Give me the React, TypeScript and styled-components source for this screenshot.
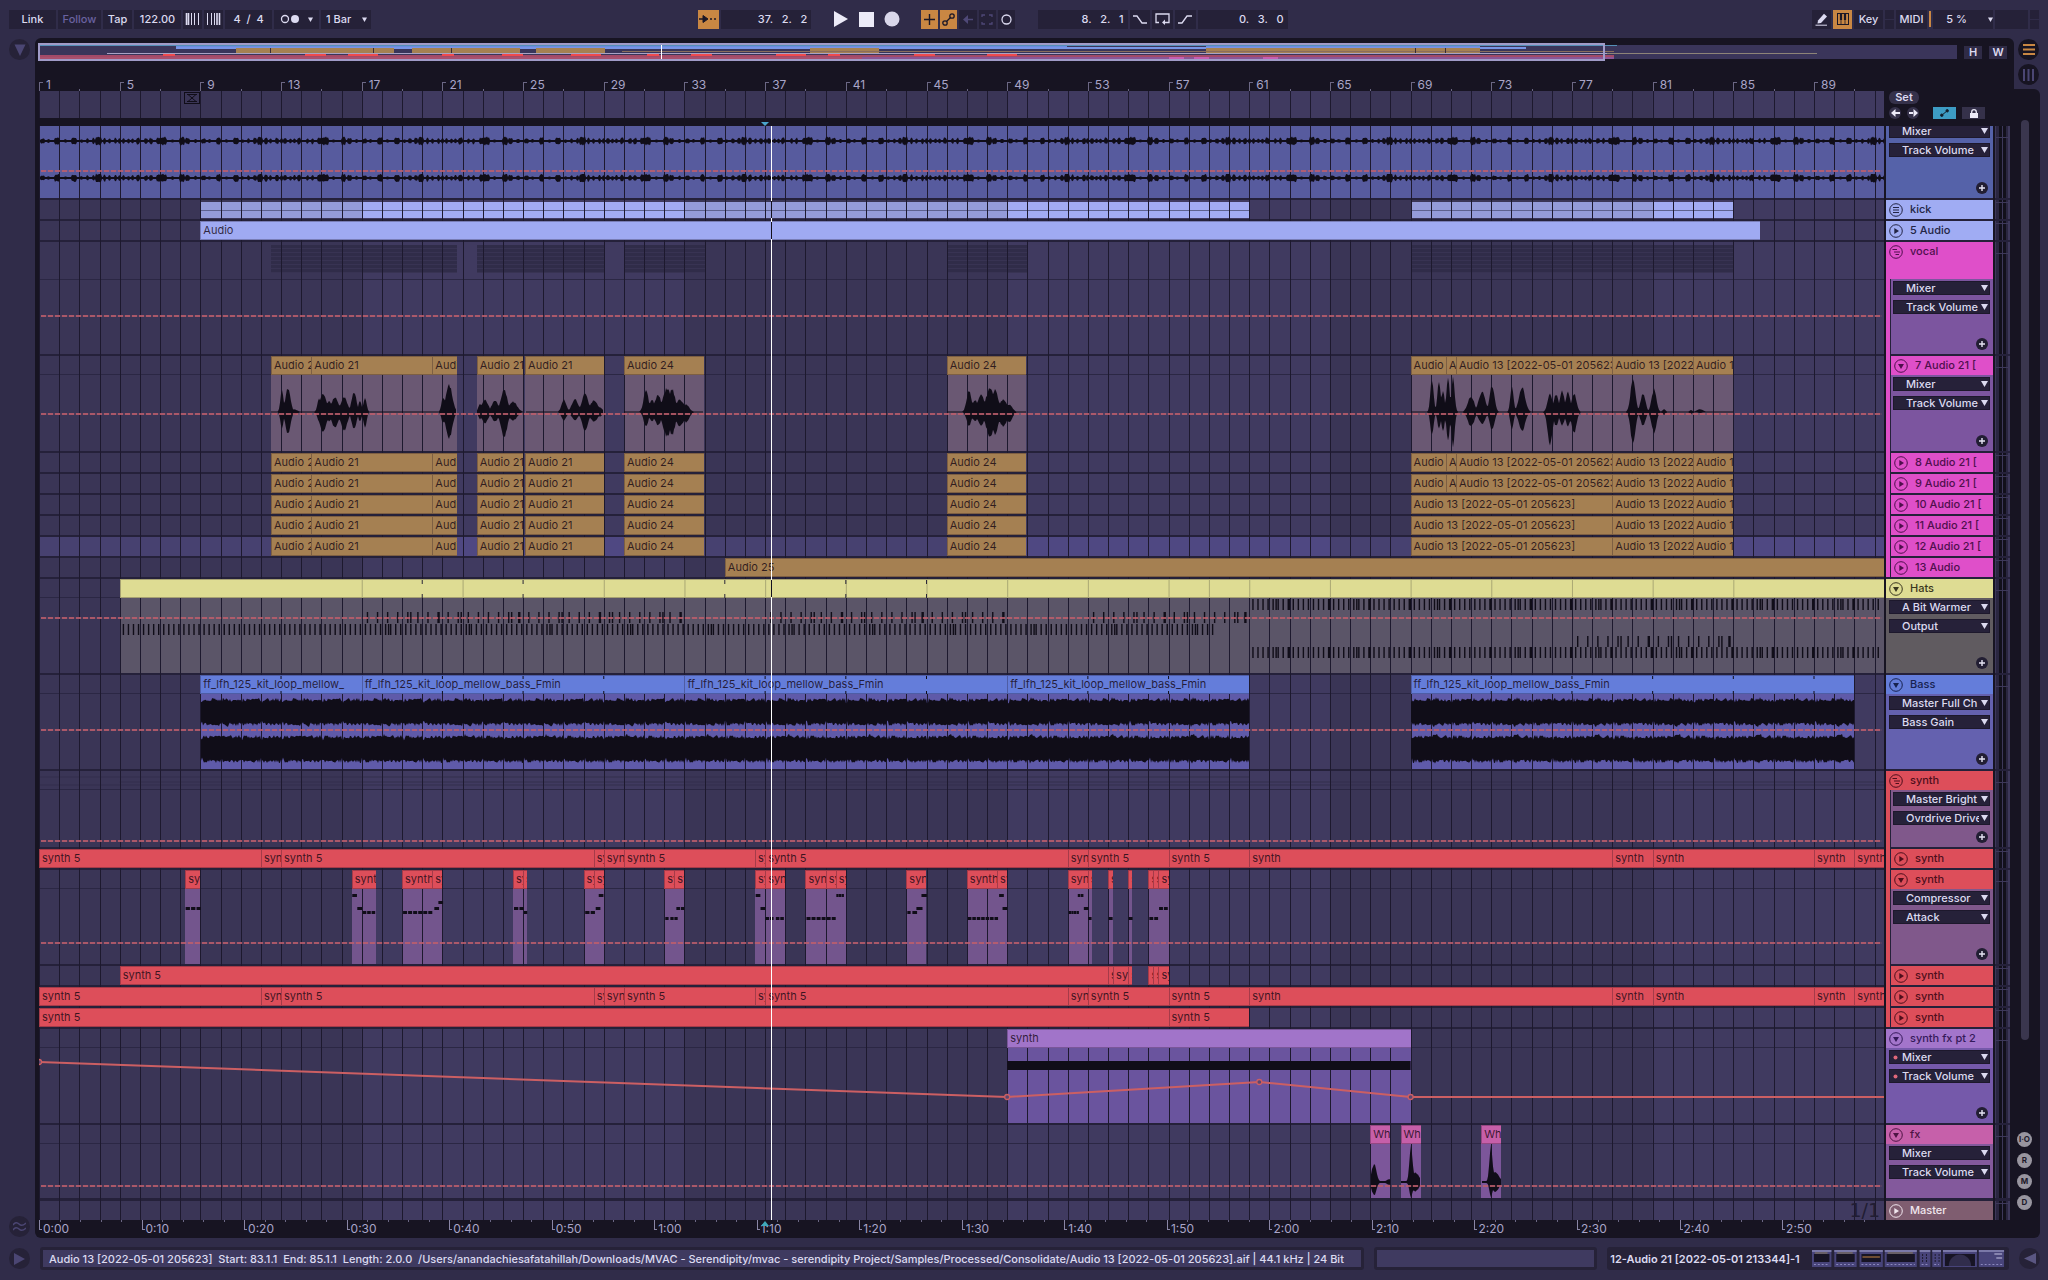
import React from "react";
import styled, { createGlobalStyle } from "styled-components";

/* ---------- palette ---------- */
const C = {
  frame: "#302c49",
  well: "#252138",
  black: "#171422",
  line: "#25213a",
  laneA: "#3a3556",
  laneB: "#403a60",
  text: "#dcdaf0",
  dim: "#a9a5c8",
  orange: "#c98743",
  automation: "#cc5f63",
};

/* ---------- timeline geometry ---------- */
const TOTAL_BARS = 91.47;
const SECONDS = 179.94;
const LANE_UNITS = 1845;
const PX_PER_BAR = LANE_UNITS / TOTAL_BARS;
const pct = (bar: number) => `${((bar - 1) / TOTAL_BARS) * 100}%`;
const span = (from: number, to: number) => ({
  left: pct(from),
  width: `${((Math.min(to, TOTAL_BARS + 1) - from) / TOTAL_BARS) * 100}%`,
});
const bx = (bar: number) => (bar - 1) * PX_PER_BAR;

const Global = createGlobalStyle`
  * { box-sizing: border-box; }
  body {
    margin: 0;
    background: ${C.frame};
    color: ${C.text};
    font: 500 11px/16px Inter, "Liberation Sans", sans-serif;
  }
  button, input, select { font: inherit; color: inherit; margin: 0; border: 0; border-radius: 0; }
  button { padding: 0; }
`;

/* ---------- frame ---------- */
const App_ = styled.div`
  display: flex;
  flex-direction: column;
  min-height: 100vh;
`;
const Toolbar = styled.header`
  display: flex;
  align-items: center;
  height: 38px;
  padding: 0 9px;
`;
const Group = styled.div<{ $gap?: number }>`
  display: flex;
  align-items: center;
  gap: ${(p) => p.$gap ?? 2}px;
`;
const Transport = styled(Group)`
  margin: 0 19px;
`;
const Spacer = styled.div<{ $grow: number; $basis?: number }>`
  flex: ${(p) => p.$grow} 1 ${(p) => p.$basis ?? 0}px;
`;
const Tool = styled.button<{ $w: number; $on?: boolean; $dim?: boolean }>`
  display: flex;
  align-items: center;
  justify-content: center;
  gap: 8px;
  width: ${(p) => p.$w}px;
  height: 19px;
  background: ${(p) => (p.$on ? C.orange : C.well)};
  color: ${(p) => (p.$on ? "#1b1726" : p.$dim ? "#6a62a0" : C.text)};
`;
const Field = styled.input<{ $w: number; $align?: string }>`
  width: ${(p) => p.$w}px;
  height: 19px;
  padding: 0 4px;
  background: ${C.well};
  text-align: ${(p) => p.$align ?? "center"};
`;
const Bare = styled.button`
  display: flex;
  width: 16px;
  height: 19px;
  align-items: center;
  justify-content: center;
  background: none;
`;
const PickBox = styled.div<{ $w: number }>`
  position: relative;
  width: ${(p) => p.$w}px;
  height: 19px;
  background: ${C.well};
  select {
    appearance: none;
    width: 100%;
    height: 100%;
    padding: 0 14px 0 5px;
    background: none;
    outline: 0;
  }
  svg {
    position: absolute;
    right: 4px;
    top: 7px;
    pointer-events: none;
  }
`;
const Split = styled.div<{ $w: number }>`
  width: ${(p) => p.$w}px;
  height: 19px;
  background: linear-gradient(${C.well} 0 9px, ${C.frame} 9px 10px, ${C.well} 10px);
`;
const Load = styled.div`
  width: 2px;
  height: 16px;
  background: ${C.orange};
`;

const Body = styled.div`
  display: flex;
  flex: 1;
`;
const Rail = styled.div<{ $w: number }>`
  display: flex;
  flex-direction: column;
  width: ${(p) => p.$w}px;
  flex: none;
`;
const Round = styled.button<{ $hi?: boolean }>`
  display: flex;
  align-items: center;
  justify-content: center;
  width: 21px;
  height: 21px;
  flex: none;
  border-radius: 50%;
  background: ${(p) => (p.$hi ? C.black : "#262238")};
`;
const LeftRail = styled(Rail)`
  padding: 1px 0 1px 9px;
  justify-content: space-between;
`;
const RailIcons = styled.div`
  display: flex;
  flex-direction: column;
  gap: 4px;
  height: 51px;
  padding: 1px 0 0 4px;
`;
const RailBody = styled.div`
  display: flex;
  flex-direction: column;
  flex: 1;
  align-items: center;
  width: 26px;
  padding: 31px 5px 28px 0;
  background: ${C.black};
  border-radius: 0 6px 6px 0;
`;
const Thumb = styled.div`
  width: 8px;
  height: 920px;
  border-radius: 4px;
  background: #3a364e;
`;
const Toggles = styled.div`
  display: flex;
  flex-direction: column;
  gap: 6px;
  margin-top: auto;
`;
const Toggle = styled.button`
  width: 15px;
  height: 15px;
  border-radius: 50%;
  background: #98959f;
  color: #1d1929;
  font-size: 8px;
  font-weight: 700;
  line-height: 15px;
`;

const Panel = styled.main`
  display: flex;
  flex-direction: column;
  flex: 1;
  min-width: 0;
  padding: 5px 4px 0 4px;
  background: ${C.black};
  border-radius: 6px 6px 0 6px;
`;
const OverviewRow = styled.div`
  display: flex;
  align-items: center;
  gap: 7px;
  height: 18px;
  padding-right: 3px;
`;
const Overview = styled.div`
  position: relative;
  flex: 1;
  height: 14px;
  background: #3a355a;
  svg { display: block; width: 100%; height: 100%; }
`;
const Selection = styled.div`
  position: absolute;
  left: -1px;
  top: -2px;
  width: 81.7%;
  height: 18px;
  border: 2px solid #a09bc8;
`;
const Fit = styled.button<{ $w: number }>`
  width: ${(p) => p.$w}px;
  height: 13px;
  background: #2f2b46;
  font-weight: 600;
  line-height: 13px;
`;

const Arrange = styled.div`
  display: grid;
  grid-template-columns: minmax(0, 1fr) 107px 15px;
  column-gap: 2px;
`;
const Ruler = styled.div<{ $h: number }>`
  position: relative;
  height: ${(p) => p.$h}px;
  overflow: hidden;
`;
const BarMark = styled.span`
  position: absolute;
  bottom: 0;
  height: 14px;
  padding-left: 7px;
  color: ${C.dim};
  font-size: 12px;
  font-weight: 400;
  line-height: 15px;
  &::before {
    content: "";
    position: absolute;
    left: 0;
    bottom: 0;
    width: 3px;
    height: 8px;
    border: solid #6b6784;
    border-width: 1px 0 0 1px;
  }
`;
const Tick = styled.i<{ $h: number; $top?: boolean }>`
  position: absolute;
  ${(p) => (p.$top ? "top: 0;" : "bottom: 0;")}
  width: 1px;
  height: ${(p) => p.$h}px;
  background: #6b6784;
`;
const TimeMark = styled.span`
  position: absolute;
  top: 0;
  height: 10px;
  padding-left: 3px;
  border-left: 1px solid #8a86a6;
  color: ${C.dim};
  font-size: 12px;
  font-weight: 400;
  line-height: 17px;
  &::after {
    content: "";
    position: absolute;
    left: 0;
    bottom: 0;
    width: 2px;
    height: 1px;
    background: #8a86a6;
  }
`;

/* one background tile covers 32 bars: 16 dark, 16 light */
const shade = `
  background-image: linear-gradient(to right, ${C.laneA} 50%, ${C.laneB} 50%);
  background-size: calc(100% * ${32 / TOTAL_BARS}) 100%;
`;

const Scrub = styled.div`
  position: relative;
  height: 27px;
  margin-bottom: 8px;
  ${shade}
`;
const Lanes = styled.div`
  position: relative;
  display: flex;
  flex-direction: column;
  gap: 2px;
  overflow: hidden;
  background: ${C.line};
  isolation: isolate;
`;
const Lane = styled.div<{ $h: number; $sel?: boolean; $title?: number; $last?: boolean }>`
  position: relative;
  flex: none;
  height: ${(p) => p.$h}px;
  margin-top: ${(p) => (p.$last ? 1 : 0)}px;
  overflow: hidden;
  ${shade}
  ${(p) =>
    p.$sel
      ? `background-image: linear-gradient(to right, #474170 50%, #4f4882 50%);`
      : ""}
  ${(p) =>
    p.$title
      ? `&::before { content: ""; position: absolute; left: 0; right: 0; top: ${p.$title}px; height: 1px; background: #2b2744; }`
      : ""}
`;
const GridSvg = styled.svg`
  position: absolute;
  inset: 0;
  width: 100%;
  height: 100%;
  z-index: 1;
  pointer-events: none;
`;
const Art = styled.svg<{ $z?: number }>`
  position: absolute;
  inset: 0;
  width: 100%;
  height: 100%;
  z-index: ${(p) => p.$z ?? 2};
  pointer-events: none;
`;
const ClipBox = styled.div`
  position: absolute;
  top: 0;
  bottom: 0;
`;
const ClipBody = styled.div<{ $c: string; $top: number }>`
  position: absolute;
  inset: ${(p) => p.$top}px 0 0 0;
  background: ${(p) => p.$c};
`;
const ClipTitle = styled.div<{ $c: string }>`
  position: relative;
  z-index: 3;
  height: 19px;
  padding-left: 2px;
  overflow: hidden;
  background: ${(p) => p.$c};
  border: solid rgba(20, 10, 30, 0.28);
  border-width: 1px 0 1px 1px;
  color: rgba(22, 8, 20, 0.82);
  font-weight: 400;
  line-height: 17px;
  white-space: nowrap;
`;
const KickClip = styled.div<{ $c: string }>`
  position: absolute;
  top: 2px;
  bottom: 1px;
  background: linear-gradient(${(p) => p.$c} 0 8px, #5d618f 8px 9px, ${(p) => p.$c} 9px);
`;
const Dashes = styled.div<{ $y: number }>`
  position: absolute;
  z-index: 4;
  left: 2px;
  right: 2px;
  top: ${(p) => p.$y}px;
  height: 2px;
  background: repeating-linear-gradient(to right, rgba(190, 94, 108, 0.85) 0 5px, rgba(184, 92, 107, 0.15) 5px 7px);
`;
const Stripes = styled.div`
  position: absolute;
  top: 3px;
  height: 28px;
  background: repeating-linear-gradient(#302c49 0 3px, #383353 3px 4px);
`;
const Playhead = styled.div`
  position: absolute;
  top: 0;
  bottom: 0;
  width: 1px;
  z-index: 5;
  background: #fff;
`;
const HeadShadow = styled.div<{ $h: number }>`
  position: absolute;
  top: 1px;
  height: ${(p) => p.$h}px;
  width: 1px;
  z-index: 6;
  background: #14111f;
`;
const Insert = styled.svg<{ $top: number }>`
  position: absolute;
  top: ${(p) => p.$top}px;
  margin-left: -5px;
  z-index: 6;
`;
const GridSize = styled.span`
  position: absolute;
  right: 4px;
  bottom: 0;
  z-index: 3;
  color: #211d33;
  font: 400 19px/19px "DejaVu Sans", sans-serif;
`;

/* ---------- track headers ---------- */
const SetBox = styled.div`
  display: flex;
  flex-direction: column;
  gap: 3px;
  padding-left: 3px;
`;
const SetButton = styled.button`
  width: 30px;
  height: 13px;
  border-radius: 6px;
  background: #35314a;
  font-weight: 600;
  line-height: 13px;
`;
const Dot = styled.button`
  display: flex;
  align-items: center;
  justify-content: center;
  width: 12px;
  height: 12px;
  border-radius: 50%;
  background: #35314a;
`;
const SmallKey = styled.button<{ $on?: boolean }>`
  display: flex;
  align-items: center;
  justify-content: center;
  width: 23px;
  height: 12px;
  background: ${(p) => (p.$on ? "#3d9cc4" : "#35314a")};
  margin-left: ${(p) => (p.$on ? 8 : 0)}px;
`;
const Heads = styled.div`
  display: flex;
  flex-direction: column;
  gap: 2px;
  background: ${C.line};
  overflow: hidden;
`;
const HeadGroup = styled.div<{ $c: string }>`
  background: ${(p) => p.$c};
`;
const HeadKids = styled.div`
  display: flex;
  flex-direction: column;
  gap: 2px;
  margin-left: 4px;
  border-left: 1px solid ${C.line};
  background: ${C.line};
`;
const Head = styled.section<{ $h: number; $c: string; $last?: boolean }>`
  display: flex;
  flex-direction: column;
  flex: none;
  height: ${(p) => p.$h}px;
  margin-top: ${(p) => (p.$last ? 1 : 0)}px;
  overflow: hidden;
  background: ${(p) => p.$c};
`;
const HeadTitle = styled.div<{ $c: string; $fg: string; $h?: number }>`
  display: flex;
  flex: none;
  gap: 7px;
  height: ${(p) => p.$h ?? 19}px;
  padding: 0 3px;
  background: ${(p) => p.$c};
  color: ${(p) => p.$fg};
  line-height: 18px;
  white-space: nowrap;
  overflow: hidden;
`;
const Fold = styled.button`
  display: flex;
  width: 14px;
  height: 19px;
  flex: none;
  align-items: center;
  background: none;
  color: inherit;
`;
const Choosers = styled.div<{ $inset?: boolean; $scrolled?: boolean }>`
  display: flex;
  flex-direction: column;
  flex: 1;
  gap: 5px;
  padding: 2px 3px 3px ${(p) => (p.$inset ? 2 : 3)}px;
  margin-top: ${(p) => (p.$scrolled ? -4 : 0)}px;
`;
const Chooser = styled.div`
  position: relative;
  flex: none;
  height: 14px;
  background: #262139;
  outline: 1px solid rgba(20, 16, 32, 0.5);
  outline-offset: -1px;
  select {
    display: block;
    appearance: none;
    width: 100%;
    height: 14px;
    padding: 0 11px 0 13px;
    background: none;
    line-height: 14px;
    outline: 0;
    overflow: hidden;
    white-space: nowrap;
  }
`;
const ChooserArrow = styled.svg`
  position: absolute;
  right: 2px;
  top: 4px;
  pointer-events: none;
`;
const ChooserLed = styled.svg`
  position: absolute;
  left: 4px;
  top: 5px;
  pointer-events: none;
`;
const Add = styled.button`
  display: flex;
  align-items: center;
  justify-content: center;
  width: 12px;
  height: 12px;
  margin: auto 2px 1px auto;
  border-radius: 50%;
  background: #221e33;
`;
const Meters = styled.div`
  display: flex;
  flex-direction: column;
  gap: 2px;
  background: ${C.line};
`;
const Meter = styled.div<{ $h: number; $last?: boolean }>`
  flex: none;
  height: ${(p) => p.$h}px;
  margin-top: ${(p) => (p.$last ? 1 : 0)}px;
  background: linear-gradient(
    to right,
    #3d385a 0 1px, #2a2640 1px 4px, #12101b 4px 7px, #3d385a 7px 8px, #12101b 8px 11px,
    #2a2640 11px 13px, #3d385a 13px
  );
  &::before {
    content: "";
    display: block;
    height: ${(p) => (p.$h > 19 ? 11 : 2)}px;
    border-bottom: 1px solid #3d385a;
  }
`;

/* ---------- footer ---------- */
const Footer = styled.footer`
  display: flex;
  align-items: center;
  gap: 10px;
  padding: 9px 8px 10px 9px;
`;
const StatusBox = styled.div<{ $basis: number; $dark?: boolean }>`
  display: flex;
  align-items: center;
  flex: ${(p) => p.$basis} 1 0;
  min-width: 0;
  height: 23px;
  padding: 0 ${(p) => (p.$dark ? 3 : 6)}px;
  border: 3px solid #262238;
  border-width: ${(p) => (p.$dark ? "0" : "3px")};
  border-radius: 3px;
  background: ${(p) => (p.$dark ? "#262238" : "#3f3a60")};
  font-weight: ${(p) => (p.$dark ? 600 : 500)};
  white-space: pre;
  overflow: hidden;
`;
const DeviceStrip = styled.svg`
  margin-left: auto;
  flex: none;
`;

/* ---------- drawings ---------- */
const Down = ({ s = 5, c = C.text }: { s?: number; c?: string }) => (
  <svg width={s} height={s} viewBox="0 0 6 6"><path d="M0 0.5H6L3 6Z" fill={c} /></svg>
);
const FoldIcon = ({ kind }: { kind: "open" | "closed" | "group" | "list" }) => (
  <svg width="14" height="14" viewBox="0 0 14 14" fill="none" stroke="currentColor">
    <circle cx="7" cy="7" r="6.3" />
    {kind === "open" && <path d="M4 5H10L7 10Z" fill="currentColor" stroke="none" />}
    {kind === "closed" && <path d="M5.3 4V10L10 7Z" fill="currentColor" stroke="none" />}
    {kind === "group" && <path d="M3.5 4.5H8M5 7H11M6.500 9.500H10" />}
    {kind === "list" && <path d="M4 4.500H10M4 7H10M4 9.500H10" />}
  </svg>
);

const noise = (i: number) => {
  const v = Math.sin(i * 127.1 + 11.7) * 43758.5453;
  return v - Math.floor(v);
};
const outline = (from: number, to: number, mid: number, up: (x: number) => number, down: (x: number) => number) => {
  const top: string[] = [];
  const low: string[] = [];
  for (let x = from; x <= to; x += 1) {
    top.push(`${x.toFixed(0)} ${(mid - up(x)).toFixed(1)}`);
    low.unshift(`${x.toFixed(0)} ${(mid + down(x)).toFixed(1)}`);
  }
  return `M${top.join("L")}L${low.join("L")}Z`;
};

/* quiet loop: bursts repeat every eight bars */
const bursts: [number, number, number][] = [
  [0.15, 0.1, 2.5], [0.45, 0.05, 2], [0.9, 0.11, 4], [1.3, 0.05, 2], [1.75, 0.12, 4], [2.1, 0.05, 2], [2.4, 0.06, 3],
  [2.7, 0.07, 3.5], [2.95, 0.13, 5], [3.25, 0.06, 4], [3.5, 0.05, 3], [3.8, 0.06, 3.5], [4.0, 0.05, 3], [4.2, 0.06, 3],
  [4.45, 0.05, 2.5], [4.65, 0.05, 3], [4.9, 0.08, 3.5], [5.3, 0.06, 3], [5.55, 0.06, 3.5], [5.95, 0.12, 4],
  [6.2, 0.14, 4.5], [6.6, 0.05, 2], [7.1, 0.12, 4.5], [7.38, 0.1, 3.5], [7.75, 0.06, 2.5],
];
const loopAmp = (seed: number) => (x: number) => {
  const b = (x / PX_PER_BAR) % 8;
  let a = 0.9;
  for (const [p, w, h] of bursts) if (Math.abs(b - p) < w) a = Math.max(a, h * (0.65 + 0.35 * noise((x % 161) + seed)));
  return a;
};
const loopTop = outline(1, LANE_UNITS, 15, loopAmp(3), loopAmp(5));
const loopLow = outline(1, LANE_UNITS, 52, loopAmp(9), loopAmp(13));

type Peak = [number, number, number, number];
const voice24: Peak[] = [
  [646, 23, 15, 3], [652, 13, 10, 3], [658, 18, 14, 4], [667, 25, 26, 5], [672, 24, 24, 4], [680, 13, 15, 5], [686, 8, 11, 4],
];
const voicePeaks: Peak[] = [
  [282, 23, 17, 2], [288, 26, 24, 3], [294, 3, 3, 4],
  [319, 14, 10, 2], [323, 20, 22, 4], [329, 12, 10, 3], [335, 16, 17, 4], [344, 16, 20, 4], [354, 21, 18, 3], [360, 12, 10, 2], [365, 15, 17, 2],
  [443, 16, 12, 2], [449, 29, 28, 4],
  [480, 9, 8, 2], [485, 13, 12, 4], [495, 12, 10, 4], [504, 24, 27, 4], [513, 11, 9, 5],
  [564, 13, 9, 3], [575, 14, 9, 4], [585, 19, 19, 4], [594, 12, 10, 5], [600, 5, 5, 3],
  ...voice24,
  ...voice24.map(([x, a, b, w]) => [x + 323, a, b, w] as Peak),
  [1432, 35, 25, 2], [1439, 33, 18, 2], [1443, 22, 20, 2], [1448, 36, 30, 2], [1453, 38, 38, 2],
  [1471, 17, 16, 4], [1482, 22, 13, 4], [1492, 28, 19, 3], [1512, 28, 19, 2], [1522, 26, 20, 4],
  [1550, 20, 36, 3], [1556, 19, 15, 3], [1562, 22, 14, 3], [1568, 21, 15, 3], [1574, 20, 23, 3],
  [1633, 36, 34, 3], [1643, 20, 15, 3], [1654, 24, 22, 3], [1664, 3, 3, 2], [1691, 2, 2, 2], [1700, 3, 1, 4],
];
const peakAmp = (peaks: Peak[], side: 1 | 2, floor: number) => (x: number) => {
  let a = floor;
  for (const p of peaks) {
    const d = Math.abs(x + 39 - p[0]) / p[3];
    if (d < 2.2) a = Math.max(a, p[side] * Math.exp(-d * d * 0.8) * (0.86 + 0.14 * noise(x)));
  }
  return a;
};
const voiceClips: [number, number][] = [[12.5, 21.7], [22.7, 25], [25.1, 29], [30, 33.95], [46, 49.95], [69, 85]];
const voicePaths = voiceClips.map(([a, b]) =>
  outline(Math.ceil(bx(a)), Math.floor(bx(b)), 56, peakAmp(voicePeaks, 1, 0.5), peakAmp(voicePeaks, 2, 0.5)),
);
const fxPeaks: Peak[] = [
  [1374, 19, 14, 3], [1389, 3, 3, 3], [1411, 37, 16, 2], [1415, 10, 10, 5], [1491, 38, 16, 2], [1495, 10, 10, 5],
];
const fxClips: [number, number][] = [[67, 68], [68.5, 69.5], [72.5, 73.5]];
const fxPaths = fxClips.map(([a, b]) =>
  outline(Math.ceil(bx(a)), Math.floor(bx(b)), 57, peakAmp(fxPeaks, 1, 1), (x) => Math.min(16, peakAmp(fxPeaks, 2, 1)(x))),
);
const bassAmp = (seed: number) => (x: number) => {
  const b = (x / PX_PER_BAR) % 4;
  const dip = b % 1 < 0.1 ? 2 : 0;
  const swell = b > 1 && b < 1.4 ? 1 : 0;
  return 10.5 + 3.5 * noise((x % 81) + seed) + swell - dip;
};
const bassClips: [number, number][] = [[9, 61], [69, 91]];
const bassPaths = bassClips.flatMap(([a, b]) =>
  [37, 74].map((mid) => outline(Math.ceil(bx(a)), Math.floor(bx(b)), mid, bassAmp(mid), bassAmp(mid + 40))),
);

/* hi-hat hits: [from, to, step, y] */
const hatRuns: [number, number, number, number][] = [
  [5.15, 59.2, 0.25, 45], [17.25, 33, 0.5, 33], [37.25, 49, 0.5, 33], [53.25, 61, 0.5, 33],
  [61.15, 92.4, 0.25, 20], [77.25, 85, 0.5, 57], [61.15, 92.4, 0.25, 68],
];
const hatHits: { x: number; y: number; w: number }[] = [];
hatRuns.forEach(([a, b, s, y]) => {
  let i = 0;
  for (let t = a; t < b; t += s, i += 1) {
    hatHits.push({ x: bx(t), y, w: a > 17 && i % 8 === 7 ? 2.4 : 1.4 });
    if (i % (s === 0.5 ? 5 : 16) === 4 && t > 17) hatHits.push({ x: bx(t) + 3, y, w: 1.4 });
  }
});

/* MIDI notes for the synth part: [bar, count, step, y] */
const noteRuns: [number, number, number, number][] = [
  [8.27, 3, 0.27, 37], [16.53, 1, 0.3, 24], [16.78, 1, 0.3, 37], [17.05, 3, 0.22, 41],
  [19.05, 6, 0.25, 41], [20.6, 1, 0.3, 37], [20.8, 1, 0.3, 31], [24.55, 2, 0.27, 37], [25.04, 1, 0.2, 41],
  [28.08, 2, 0.27, 41], [28.6, 1, 0.3, 37], [28.75, 1, 0.3, 24], [32.05, 1, 0.2, 47], [32.3, 2, 0.2, 47], [32.6, 2, 0.22, 37],
  [36.53, 1, 0.3, 24], [36.77, 1, 0.3, 37], [37.02, 2, 0.22, 47], [37.53, 2, 0.22, 47],
  [39.05, 6, 0.25, 47], [40.53, 3, 0.13, 24],
  [44.05, 1, 0.2, 41], [44.3, 1, 0.3, 41], [44.5, 1, 0.4, 37], [44.75, 1, 0.35, 24],
  [47.05, 7, 0.22, 47], [48.6, 1, 0.3, 24], [48.77, 1, 0.3, 37],
  [52.05, 4, 0.13, 41], [52.5, 2, 0.15, 24], [52.8, 1, 0.3, 37], [53.02, 1, 0.2, 47],
  [54.03, 1, 0.25, 47], [55.02, 1, 0.25, 47], [56.05, 2, 0.24, 47], [56.53, 2, 0.24, 37],
];

/* ---------- clips ---------- */
type Clip = [string, number, number];
const BROWN = "#a58052";
const RED = "#dd4e5a";
const YELLOW = "#dedc93";
const BLUE = "#647dda";

const vocalLeft: Clip[] = [
  ["Audio 21", 12.5, 14.5], ["Audio 21", 14.5, 20.5], ["Audio 21", 20.5, 21.7],
  ["Audio 21", 22.7, 25], ["Audio 21", 25.1, 29], ["Audio 24", 30, 33.95], ["Audio 24", 46, 49.95],
];
const take = "Audio 13 [2022-05-01 205623]";
const vocalA: Clip[] = [
  ...vocalLeft, ["Audio 13", 69, 70.75], ["Audio 13", 70.75, 71.25], [take, 71.25, 79], [take, 79, 83], [take, 83, 85],
];
const vocalB: Clip[] = [...vocalLeft, [take, 69, 79], [take, 79, 83], [take, 83, 85]];
const synthLong: Clip[] = [
  ["synth 5", 1, 12], ["synth 5", 12, 13], ["synth 5", 13, 28.5], ["synth 5", 28.5, 29], ["synth 5", 29, 30],
  ["synth 5", 30, 36.5], ["synth 5", 36.5, 37], ["synth 5", 37, 52], ["synth 5", 52, 53], ["synth 5", 53, 57],
  ["synth 5", 57, 61], ["synth", 61, 79], ["synth", 79, 81], ["synth", 81, 89], ["synth", 89, 91], ["synth", 91, 93],
];
const midiBars: [number, number][] = [
  [8.25, 9], [16.5, 17.7], [19, 20.5], [20.5, 21], [24.5, 25], [25, 25.2], [28, 28.5], [28.5, 29], [32, 32.5],
  [32.5, 33], [36.5, 37], [37, 38], [39, 40], [40, 40.5], [40.5, 41], [44, 45], [47, 48.5], [48.5, 49], [52, 53],
  [53, 53.2], [54, 54.25], [55, 55.2], [56, 56.25], [56.25, 56.5], [56.5, 57],
];
const midi: Clip[] = midiBars.map(([a, b]) => ["synth 5", a, b]);
const synthMid: Clip[] = [
  ["synth 5", 5, 54], ["synth 5", 54, 54.25], ["synth 5", 54.25, 55], ["synth 5", 55, 55.2],
  ["synth 5", 56, 56.25], ["synth 5", 56.25, 56.5], ["synth 5", 56.5, 57],
];
const loop = "ff_lfh_125_kit_loop_mellow_bass_Fmin";
const bass: Clip[] = [["ff_lfh_125_kit_loop_mellow_", 9, 17], [loop, 17, 33], [loop, 33, 49], [loop, 49, 61], [loop, 69, 91]];

const Clips = ({ list, color, body }: { list: Clip[]; color: string; body?: string }) => (
  <>
    {list.map(([name, a, b], i) => (
      <ClipBox key={i} style={span(a, b)}>
        <ClipTitle $c={color}>{name}</ClipTitle>
        {body && <ClipBody $c={body} $top={19} />}
      </ClipBox>
    ))}
  </>
);

const barLines = Array.from({ length: 92 }, (_, i) => i);
const Grid = () => (
  <GridSvg viewBox={`0 0 ${LANE_UNITS} 10`} preserveAspectRatio="none" shapeRendering="crispEdges">
    {barLines.map((i) => (
      <rect key={i} x={i * PX_PER_BAR} y="0" width="1" height="10" fill="#1d192e" />
    ))}
  </GridSvg>
);
const LaneArt = ({ h, z, children }: { h: number; z?: number; children: React.ReactNode }) => (
  <Art $z={z} viewBox={`0 0 ${LANE_UNITS} ${h}`} preserveAspectRatio="none">{children}</Art>
);

const HEAD_BAR = 37.3;
const hatSplits = [17, 22, 29, 33, 37, 41, 45, 49, 53, 57, 59, 61, 65, 69, 73, 77, 81, 85];
const INK = "#100d18";

const Timeline = () => (
  <Lanes>
    <Lane $h={72}>
      <ClipBox style={span(1, 93)}><ClipBody $c="#575b9e" $top={0} /></ClipBox>
      <LaneArt h={72}><path d={loopTop} fill={INK} /><path d={loopLow} fill={INK} /></LaneArt>
      <Dashes $y={44} />
    </Lane>
    <Lane $h={19}>
      {([[9, 17, 0], [17, 33, 1], [33, 49, 0], [49, 61, 1], [69, 81, 0], [81, 85, 1]] as const).map(([a, b, hi]) => (
        <KickClip key={a} $c={hi ? "#a2abf3" : "#949bd9"} style={span(a, b)} />
      ))}
      <HeadShadow $h={17} style={{ left: pct(HEAD_BAR) }} />
    </Lane>
    <Lane $h={19}>
      <Clips list={[["Audio", 9, 86.3]]} color="#9faaf2" />
      <HeadShadow $h={17} style={{ left: pct(HEAD_BAR) }} />
    </Lane>
    <Lane $h={112} $title={37}>
      {([[12.5, 21.7], [22.7, 29], [30, 34], [46, 50], [69, 85]] as const).map(([a, b]) => (
        <Stripes key={a} style={span(a, b)} />
      ))}
      <Dashes $y={73} />
    </Lane>
    <Lane $h={95} $title={18}>
      <Clips list={vocalA} color={BROWN} body="#6a5873" />
      <LaneArt h={95}>{voicePaths.map((d, i) => <path key={i} d={d} fill={INK} />)}</LaneArt>
      <Dashes $y={57} />
    </Lane>
    <Lane $h={19}><Clips list={vocalA} color={BROWN} /></Lane>
    <Lane $h={19}><Clips list={vocalA} color={BROWN} /></Lane>
    <Lane $h={19}><Clips list={vocalB} color={BROWN} /></Lane>
    <Lane $h={19}><Clips list={vocalB} color={BROWN} /></Lane>
    <Lane $h={19} $sel><Clips list={vocalB} color={BROWN} /></Lane>
    <Lane $h={19}><Clips list={[["Audio 25", 35, 93]]} color={BROWN} /></Lane>
    <Lane $h={94} $title={18}>
      <Clips list={[["", 5, 93]]} color={YELLOW} body="#5b5568" />
      <LaneArt h={94} z={3}>
        {hatSplits.map((b) => <rect key={b} x={bx(b)} y="0" width="1" height="19" fill="#aaa874" />)}
        {[20, 25, 35, 41, 45].map((b) => (
          <path key={b} d={`M${bx(b)} 1V5M${bx(b)} 15V19`} stroke="#2a2638" />
        ))}
        {hatHits.map((n, i) => <rect key={i} x={n.x} y={n.y} width={n.w} height="11" fill={INK} />)}
      </LaneArt>
      <Dashes $y={38} />
      <HeadShadow $h={17} style={{ left: pct(HEAD_BAR) }} />
    </Lane>
    <Lane $h={94} $title={18}>
      <Clips list={bass} color={BLUE} body="#5f5aa9" />
      <LaneArt h={94} z={3}>
        {[13, 21, 25, 29, 37, 41, 45, 53, 57, 73, 77, 81, 85, 89].map((b) => (
          <path key={b} d={`M${bx(b)} 1V4M${bx(b)} 16V19`} stroke={INK} />
        ))}
        {bassPaths.map((d, i) => <path key={i} d={d} fill={INK} />)}
      </LaneArt>
      <Dashes $y={54} />
    </Lane>
    <Lane $h={76} $title={18}>
      <LaneArt h={76} z={0}>
        <path d={`M${bx(5)} 11H${bx(93)}M0 14H${bx(93)}M0 6H${bx(61)}`} stroke="#332e4c" />
      </LaneArt>
      <Dashes $y={69} />
    </Lane>
    <Lane $h={19}><Clips list={synthLong} color={RED} /></Lane>
    <Lane $h={94} $title={18}>
      <Clips list={midi} color={RED} body="#73558d" />
      <LaneArt h={94}>
        {noteRuns.flatMap(([bar, n, step, y]) =>
          Array.from({ length: n }, (_, i) => (
            <rect key={`${bar}-${y}-${i}`} x={bx(bar + i * step)} y={y} width={step * 14 + 0.5} height="3" fill={INK} />
          )),
        )}
      </LaneArt>
      <Dashes $y={72} />
    </Lane>
    <Lane $h={19}><Clips list={synthMid} color={RED} /></Lane>
    <Lane $h={19}><Clips list={synthLong} color={RED} /></Lane>
    <Lane $h={19}><Clips list={[["synth 5", 1, 57], ["synth 5", 57, 61]]} color={RED} /></Lane>
    <Lane $h={94} $title={18}>
      <Clips list={[["synth", 49, 69]]} color="#a174c9" body="#6a549e" />
      <LaneArt h={94} z={3}>
        <rect x={bx(49)} y="32" width={bx(69) - bx(49)} height="9" fill={INK} />
        <path d={`M0 33L${bx(49)} 68L${bx(61.5)} 53L${bx(69)} 68H${LANE_UNITS}`} fill="none" stroke={C.automation} strokeWidth="2" />
        {[[0, 33], [bx(49), 68], [bx(61.5), 53], [bx(69), 68]].map(([x, y], i) => (
          <circle key={i} cx={x} cy={y} r="2.5" fill="#5a4670" stroke={C.automation} strokeWidth="1.3" />
        ))}
      </LaneArt>
    </Lane>
    <Lane $h={73} $title={18}>
      <Clips list={[["Wh", 67, 68], ["Wh", 68.5, 69.5], ["Wh", 72.5, 73.5]]} color="#c65fa9" body="#7c569a" />
      <LaneArt h={73}>{fxPaths.map((d, i) => <path key={i} d={d} fill={INK} />)}</LaneArt>
      <Dashes $y={60} />
    </Lane>
    <Lane $h={19} $last><GridSize>1/1</GridSize></Lane>
    <Grid />
    <Playhead style={{ left: pct(HEAD_BAR) }} />
  </Lanes>
);

/* ---------- header column ---------- */
const ChooserField = ({ label, value, led }: { label: string; value: string; led?: boolean }) => (
  <Chooser>
    <select aria-label={label} defaultValue={value}><option>{value}</option></select>
    <ChooserArrow width="7" height="6" viewBox="0 0 7 6"><path d="M0 0H7L3.5 6Z" fill={C.text} /></ChooserArrow>
    {led && <ChooserLed width="5" height="5" viewBox="0 0 5 5"><circle cx="2.5" cy="2.5" r="2" fill="#e0687a" /></ChooserLed>}
  </Chooser>
);
const AddLane = () => (
  <Add aria-label="Add automation lane">
    <svg width="8" height="8" viewBox="0 0 8 8"><path d="M4 1V7M1 4H7" stroke="#e6e4f4" strokeWidth="1.4" /></svg>
  </Add>
);
type HeadSpec = {
  h: number; name: string; color: string; fg: string; icon: "open" | "closed" | "group" | "list";
  body?: string; picks?: [string, string]; led?: boolean; inset?: boolean; add?: boolean; last?: boolean;
};
const TrackHead = ({ h, name, color, fg, icon, body, picks, led, inset, add = true, last }: HeadSpec) => (
  <Head $h={h} $c={body ?? color} $last={last}>
    <HeadTitle $c={color} $fg={fg}>
      <Fold aria-label={`Fold ${name}`}><FoldIcon kind={icon} /></Fold>
      {name}
    </HeadTitle>
    {picks && (
      <Choosers $inset={inset}>
        <ChooserField label={`${name} device`} value={picks[0]} led={led} />
        <ChooserField label={`${name} parameter`} value={picks[1]} led={led} />
        {add && <AddLane />}
      </Choosers>
    )}
  </Head>
);

const PINK = "#df4fc9";
const PINK_FG = "#4f0f4d";
const RED_FG = "#4e0f1c";
const mixer: [string, string] = ["Mixer", "Track Volume"];

const Headers = () => (
  <Heads>
    <Head $h={72} $c="#5562a9">
      <Choosers $scrolled>
        <ChooserField label="Device" value="Mixer" />
        <ChooserField label="Parameter" value="Track Volume" />
        <AddLane />
      </Choosers>
    </Head>
    <TrackHead h={19} name="kick" color="#a0acf3" fg="#232545" icon="list" />
    <TrackHead h={19} name="5 Audio" color="#a0acf3" fg="#232545" icon="closed" />
    <HeadGroup $c={PINK}>
      <HeadTitle $c={PINK} $fg={PINK_FG} $h={37}>
        <Fold aria-label="Fold vocal"><FoldIcon kind="group" /></Fold>vocal
      </HeadTitle>
      <HeadKids>
        <Head $h={75} $c="#7c559f">
          <Choosers $inset>
            <ChooserField label="vocal device" value="Mixer" />
            <ChooserField label="vocal parameter" value="Track Volume" />
            <AddLane />
          </Choosers>
        </Head>
        <TrackHead h={95} name="7 Audio 21 [" color={PINK} fg={PINK_FG} icon="open" body="#7c559f" picks={mixer} inset />
        {["8 Audio 21 [", "9 Audio 21 [", "10 Audio 21 [", "11 Audio 21 [", "12 Audio 21 [", "13 Audio"].map((n) => (
          <TrackHead key={n} h={19} name={n} color={PINK} fg={PINK_FG} icon="closed" />
        ))}
      </HeadKids>
    </HeadGroup>
    <TrackHead h={94} name="Hats" color={YELLOW} fg="#3a3720" icon="open" body="#605b60" picks={["A Bit Warmer", "Output"]} />
    <TrackHead h={94} name="Bass" color={BLUE} fg="#17224f" icon="open" body="#6461af" picks={["Master Full Ch", "Bass Gain"]} />
    <HeadGroup $c={RED}>
      <HeadTitle $c={RED} $fg={RED_FG}>
        <Fold aria-label="Fold synth"><FoldIcon kind="group" /></Fold>synth
      </HeadTitle>
      <HeadKids>
        <Head $h={57} $c="#80588b">
          <Choosers $inset>
            <ChooserField label="synth device" value="Master Bright" />
            <ChooserField label="synth parameter" value="Ovrdrive Drive" />
            <AddLane />
          </Choosers>
        </Head>
        <TrackHead h={19} name="synth" color={RED} fg={RED_FG} icon="closed" />
        <TrackHead h={94} name="synth" color={RED} fg={RED_FG} icon="open" body="#80588b" picks={["Compressor", "Attack"]} inset />
        {[1, 2, 3].map((n) => <TrackHead key={n} h={19} name="synth" color={RED} fg={RED_FG} icon="closed" />)}
      </HeadKids>
    </HeadGroup>
    <TrackHead h={94} name="synth fx pt 2" color="#a375cb" fg="#35195a" icon="open" body="#7559aa" picks={mixer} led />
    <TrackHead h={73} name="fx" color="#c660aa" fg="#4d1444" icon="open" body="#83599c" picks={mixer} add={false} />
    <TrackHead h={19} name="Master" color="#7f5d70" fg="#f0e6ee" icon="closed" last />
  </Heads>
);

const rowHeights = [72, 19, 19, 112, 95, 19, 19, 19, 19, 19, 19, 94, 94, 76, 19, 94, 19, 19, 19, 94, 73];

/* ---------- overview and device strip ---------- */
const OverviewArt = () => (
  <svg viewBox="0 0 1918 14" preserveAspectRatio="none" shapeRendering="crispEdges">
    <rect x="0" y="0" width="1578" height="1" fill="#5590b8" />
    <rect x="137" y="1" width="891" height="2" fill="#6b8be0" />
    <rect x="1167" y="1" width="274" height="2" fill="#6b8be0" />
    <rect x="137" y="2" width="1350" height="2" fill="#7795e6" />
    {[[197, 158], [373, 108], [497, 69], [771, 69], [1167, 274]].map(([x, w]) => (
      <rect key={x} x={x} y="3" width={w} height="5" fill={BROWN} />
    ))}
    <rect x="583" y="6" width="992" height="1" fill="#8a6c5c" />
    <rect x="68" y="8" width="1710" height="1" fill="#8d8478" />
    <rect x="68" y="8" width="1500" height="1" fill="#a9a2c4" />
    <rect x="0" y="10" width="1575" height="2" fill="#a34a68" />
    <rect x="0" y="12" width="1028" height="2" fill="#a8506e" />
    <rect x="823" y="12" width="752" height="2" fill="#8a5596" />
    {[124, 266, 309, 403, 463, 532, 608, 652, 737, 789, 875, 948].map((x, i) => (
      <rect key={x} x={x} y="9" width={12 + (i % 3) * 9} height="2" fill="#ee4a4e" />
    ))}
    {[1130, 1155, 1224].map((x) => <rect key={x} x={x} y="12" width="15" height="2" fill="#c65fb4" />)}
    {[231, 334, 412, 1376, 1406].map((x) => <rect key={x} x={x} y="3" width="1" height="5" fill="#3a2c33" />)}
    <rect x="622" y="0" width="1" height="14" fill="#fff" />
  </svg>
);
const devices: [number, number, string][] = [
  [0, 20, "eq"], [23, 23, "eq"], [49, 24, "warm"], [75, 33, "eq"], [111, 11, "s"], [124, 9, "s"], [135, 35, "arc"], [172, 26, "s2"],
];
const Strip = () => (
  <DeviceStrip width="194" height="19" viewBox="0 0 200 19" preserveAspectRatio="none">
    {devices.map(([x, w, k]) => (
      <g key={x}>
        <rect x={x} y="1" width={w} height="17" fill="#48447a" />
        <rect x={x} y="1" width={w} height="2" fill="#7a78a8" />
        {k !== "s" && k !== "s2" && <rect x={x + 2} y="5" width={w - 4} height={k === "arc" ? 12 : 8} fill="#171424" />}
        {k === "arc" && <path d={`M${x + 6} 17A11 11 0 0 1 ${x + 29} 17Z`} fill="#312d4c" />}
        {k === "warm" && <path d={`M${x + 3} 8H${x + 21}`} stroke="#c98743" />}
        {k === "eq" && <path d={`M${x + 3} 4H${x + w - 4}`} stroke="#9c8a4a" strokeWidth="0.8" />}
        {k !== "arc" && <path d={`M${x + 2} 15.5H${x + w - 2}`} stroke="#8d8abf" strokeDasharray="2 2" />}
        {k === "s" && <path d={`M${x + 3} 5V14M${x + 7} 5V14`} stroke="#1d1a2e" strokeDasharray="2 1" />}
        {k === "s2" && <path d={`M${x + 16} 5H${x + 24}M${x + 18} 9H${x + 24}`} stroke="#c7c5e6" />}
      </g>
    ))}
  </DeviceStrip>
);

const iconStroke = { fill: "none", stroke: "currentColor", strokeWidth: 1.3 } as const;

export default function App() {
  return (
    <App_>
      <Global />
      <Toolbar>
        <Group>
          <Tool $w={47}>Link</Tool>
          <Tool $w={43} $dim>Follow</Tool>
          <Tool $w={29}>Tap</Tool>
          <Field $w={47} aria-label="Tempo" defaultValue="122.00" />
          <Tool $w={19} aria-label="Nudge down">
            <svg width="15" height="12" viewBox="0 0 15 12" stroke="currentColor"><path d="M1.5 0V12M3.5 0V12" strokeWidth="1.6" /><path d="M6.5 0V12M9.5 0V12M13.5 0V12" /></svg>
          </Tool>
          <Tool $w={19} aria-label="Nudge up">
            <svg width="15" height="12" viewBox="0 0 15 12" stroke="currentColor"><path d="M1.5 0V12M5.5 0V12M8.5 0V12" /><path d="M11 0V12M13.5 0V12" strokeWidth="1.6" /></svg>
          </Tool>
          <Field $w={47} aria-label="Time signature" defaultValue="4  /  4" />
          <Tool $w={45} aria-label="Metronome">
            <svg width="20" height="10" viewBox="0 0 20 10"><circle cx="5" cy="5" r="3.5" {...iconStroke} /><circle cx="15" cy="5" r="4" fill="currentColor" /></svg>
            <Down />
          </Tool>
          <PickBox $w={50}>
            <select aria-label="Quantization"><option>1 Bar</option></select>
            <Down />
          </PickBox>
        </Group>
        <Spacer $grow={38} />
        <Group>
          <Tool $w={24} $on aria-label="Follow playback">
            <svg width="18" height="10" viewBox="0 0 18 10" stroke="currentColor"><path d="M0 5H5" strokeWidth="1.5" /><path d="M4 1.5L9 5L4 8.5Z" fill="currentColor" /><path d="M11 5H13M15 5H17" strokeWidth="1.5" /></svg>
          </Tool>
          <Field $w={90} $align="right" aria-label="Arrangement position" defaultValue="37.   2.   2" />
          <Transport $gap={10}>
            <Bare aria-label="Play"><svg width="15" height="16" viewBox="0 0 15 16"><path d="M1 0L15 8L1 16Z" fill="#ecebf8" /></svg></Bare>
            <Bare aria-label="Stop"><svg width="15" height="15"><rect width="15" height="15" fill="#ecebf8" /></svg></Bare>
            <Bare aria-label="Record"><svg width="16" height="16"><circle cx="8" cy="8" r="7.5" fill="#d9d7ea" /></svg></Bare>
          </Transport>
          <Tool $w={19} $on aria-label="Overdub"><svg width="11" height="11" viewBox="0 0 11 11"><path d="M5.5 0V11M0 5.5H11" stroke="currentColor" strokeWidth="1.4" /></svg></Tool>
          <Tool $w={19} $on aria-label="Automation arm"><svg width="13" height="13" viewBox="0 0 13 13" {...iconStroke}><circle cx="3" cy="10" r="2.2" /><circle cx="10" cy="3" r="2.2" /><path d="M4.5 8.5L8.5 4.5" /></svg></Tool>
          <Tool $w={19} $dim aria-label="Re-enable automation"><svg width="10" height="9" viewBox="0 0 10 9" opacity=".6"><path d="M5 0V9L0 4.5Z" fill="currentColor" /><path d="M4 4.5H10" stroke="currentColor" strokeWidth="1.5" /></svg></Tool>
          <Tool $w={19} $dim aria-label="Capture MIDI"><svg width="12" height="11" viewBox="0 0 12 11" opacity=".6" {...iconStroke}><path d="M1 3V1H4M8 1H11V3M11 8V10H8M4 10H1V8" /></svg></Tool>
          <Tool $w={19} aria-label="Session record"><svg width="11" height="11" viewBox="0 0 11 11"><circle cx="5.5" cy="5.5" r="4.5" {...iconStroke} /></svg></Tool>
          <Spacer $grow={0} $basis={21} />
          <Field $w={90} $align="right" aria-label="Loop start" defaultValue="8.   2.   1" />
          <Tool $w={23} aria-label="Punch in"><svg width="14" height="9" viewBox="0 0 14 9" {...iconStroke}><path d="M0 1H4L9 8H14" /></svg></Tool>
          <Tool $w={23} aria-label="Loop"><svg width="15" height="12" viewBox="0 0 15 12" {...iconStroke}><path d="M4 9.5H1V1H14V9.5H9" /><path d="M10 6.5L7 9.5L10 12Z" fill="currentColor" stroke="none" /></svg></Tool>
          <Tool $w={23} aria-label="Punch out"><svg width="14" height="9" viewBox="0 0 14 9" {...iconStroke}><path d="M0 8H4L9 1H14" /></svg></Tool>
          <Field $w={90} $align="right" aria-label="Loop length" defaultValue="0.   3.   0" />
        </Group>
        <Spacer $grow={61} />
        <Group>
          <Tool $w={19} aria-label="Draw mode"><svg width="13" height="13" viewBox="0 0 13 13"><path d="M3 7.5L9 0.8L12 3.5L6 10L2.5 10.5Z" fill="currentColor" /><path d="M0.5 12.2H12" stroke="currentColor" /></svg></Tool>
          <Tool $w={19} $on aria-label="Computer MIDI keyboard"><svg width="14" height="14" viewBox="0 0 14 14"><rect x="1.5" y="1.5" width="11" height="11" fill="#c98743" stroke="currentColor" /><path d="M5 2V12.5M9 2V12.5" stroke="currentColor" strokeWidth=".8" /><path d="M5 2V8M9 2V8" stroke="currentColor" strokeWidth="2.2" /></svg></Tool>
          <Tool $w={29}>Key</Tool>
          <Split $w={9} />
          <Tool $w={31}>MIDI</Tool>
          <Load />
          <Tool $w={60} aria-label="CPU load"><Spacer $grow={1} />5 %<Spacer $grow={1} /><Down /></Tool>
          <Tool $w={33} aria-label="Disk overload" />
          <Split $w={9} />
        </Group>
      </Toolbar>

      <Body>
        <LeftRail $w={35}>
          <Round aria-label="Browser"><svg width="12" height="12" viewBox="0 0 12 12"><path d="M0.5 0.5H11.5L6 12Z" fill="#4b4673" /></svg></Round>
          <Round aria-label="Groove"><svg width="13" height="11" viewBox="0 0 13 11" fill="none" stroke="#4b4673" strokeWidth="1.5"><path d="M0 4Q3 0 6 3T13 2M0 9Q3 5 6 8T13 7" /></svg></Round>
        </LeftRail>
        <Panel>
          <OverviewRow>
            <Overview><OverviewArt /><Selection /></Overview>
            <Fit $w={18}>H</Fit>
            <Fit $w={18}>W</Fit>
          </OverviewRow>
          <Arrange>
            <Ruler $h={30}>
              {barLines.filter((i) => i % 4 === 0 && i < 90).map((i) => (
                <BarMark key={i} style={{ left: pct(i + 1) }}>{i + 1}</BarMark>
              ))}
              {barLines.filter((i) => i % 4 === 2).map((i) => <Tick key={i} $h={2} style={{ left: pct(i + 1) }} />)}
            </Ruler>
            <div /><div />

            <Scrub>
              <Grid />
              <Insert $top={1} style={{ left: pct(8.42) }} width="16" height="12" viewBox="0 0 16 12" fill="none" stroke="#100d18"><rect x=".5" y=".5" width="15" height="11" /><path d="M4 2.5L12 9.5M12 2.5L4 9.5M3 2.5H13M3 9.5H13" /></Insert>
              <Insert $top={31} style={{ left: pct(37.05) }} width="8" height="4" viewBox="0 0 8 4"><path d="M0 0H8L4 4Z" fill="#4aa5cc" /></Insert>
            </Scrub>
            <SetBox>
              <SetButton>Set</SetButton>
              <Group $gap={6}>
                <Dot aria-label="Previous locator"><svg width="9" height="8" viewBox="0 0 9 8"><path d="M4.5 0V8L0 4ZM4 3H9V5H4Z" fill="#eceaf8" /></svg></Dot>
                <Dot aria-label="Next locator"><svg width="9" height="8" viewBox="0 0 9 8"><path d="M4.5 0V8L9 4ZM0 3H5V5H0Z" fill="#eceaf8" /></svg></Dot>
                <SmallKey $on aria-label="Automation mode"><svg width="9" height="8" viewBox="0 0 9 8" stroke="#14202e"><path d="M1.5 6.5L7.5 1.5" /><circle cx="1.8" cy="6.2" r="1.2" fill="#14202e" /><circle cx="7.2" cy="1.8" r="1.2" fill="#14202e" /></svg></SmallKey>
                <SmallKey aria-label="Lock envelopes"><svg width="8" height="9" viewBox="0 0 8 9"><rect x="0" y="4" width="8" height="5" fill="#eceaf8" /><path d="M1.7 4V3A2.3 2.3 0 0 1 6.3 3V4" fill="none" stroke="#eceaf8" strokeWidth="1.3" /></svg></SmallKey>
              </Group>
            </SetBox>
            <div />

            <Timeline />
            <Headers />
            <Meters>
              {rowHeights.map((h, i) => <Meter key={i} $h={h} />)}
              <Meter $h={19} $last />
            </Meters>

            <Ruler $h={18}>
              {Array.from({ length: 90 }, (_, i) => i).map((i) =>
                i % 5 === 0 ? (
                  <TimeMark key={i} style={{ left: `${((i * 2) / SECONDS) * 100}%` }}>
                    {`${Math.floor((i * 2) / 60)}:${String((i * 2) % 60).padStart(2, "0")}`}
                  </TimeMark>
                ) : (
                  <Tick key={i} $h={2} $top style={{ left: `${((i * 2) / SECONDS) * 100}%` }} />
                ),
              )}
              <Insert $top={1} style={{ left: pct(37.05) }} width="8" height="5" viewBox="0 0 8 5"><path d="M0 5H8L4 0Z" fill="#3fa9b8" /></Insert>
            </Ruler>
          </Arrange>
        </Panel>
        <Rail $w={34}>
          <RailIcons>
            <Round $hi aria-label="Arrangement view"><svg width="12" height="11" viewBox="0 0 12 11" stroke={C.orange} strokeWidth="2"><path d="M0 1H12M0 5.5H12M0 10H12" /></svg></Round>
            <Round $hi aria-label="Session view"><svg width="11" height="12" viewBox="0 0 11 12" stroke="#4b4673" strokeWidth="2"><path d="M1 0V12M5.5 0V12M10 0V12" /></svg></Round>
          </RailIcons>
          <RailBody>
            <Thumb />
            <Toggles>
              <Toggle aria-label="Show I/O">I·O</Toggle>
              <Toggle>R</Toggle>
              <Toggle>M</Toggle>
              <Toggle>D</Toggle>
            </Toggles>
          </RailBody>
        </Rail>
      </Body>

      <Footer>
        <Round aria-label="Info view"><svg width="11" height="12" viewBox="0 0 11 12"><path d="M0 0L11 6L0 12Z" fill="#4b4673" /></svg></Round>
        <StatusBox $basis={1327}>
          {"Audio 13 [2022-05-01 205623]  Start: 83.1.1  End: 85.1.1  Length: 2.0.0  /Users/anandachiesafatahillah/Downloads/MVAC - Serendipity/mvac - serendipity Project/Samples/Processed/Consolidate/Audio 13 [2022-05-01 205623].aif | 44.1 kHz | 24 Bit"}
        </StatusBox>
        <StatusBox $basis={208} />
        <StatusBox $basis={402} $dark>
          12-Audio 21 [2022-05-01 213344]-1
          <Strip />
        </StatusBox>
        <Round aria-label="Device view"><svg width="12" height="11" viewBox="0 0 12 11"><path d="M12 0V11L0 5.5Z" fill="#5a5682" /></svg></Round>
      </Footer>
    </App_>
  );
}
